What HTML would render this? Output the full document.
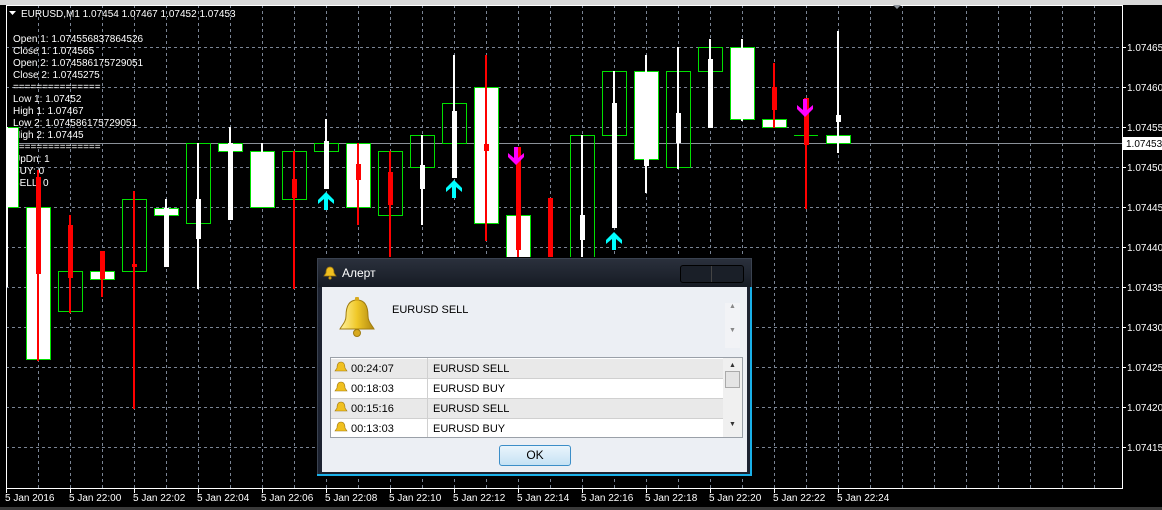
<!DOCTYPE html>
<html><head><meta charset="utf-8"><style>
body{margin:0;width:1162px;height:510px;background:#000;overflow:hidden;position:relative;font-family:"Liberation Sans",sans-serif;}
svg{position:absolute;left:0;top:0}
.t{font-family:"Liberation Sans",sans-serif;font-size:10px;fill:#fff}
#dlg{position:absolute;left:317px;top:258px;width:435px;height:218px;background:#1c2230;border:1px solid #3a4250;box-sizing:border-box;box-shadow:0 0 0 1px #000}
#dlg .bar{position:absolute;left:0;top:0;right:0;height:28px;background:linear-gradient(#2a303c,#161b24);}
#dlg .ttl{position:absolute;left:24px;top:7px;color:#fff;font-size:12px;font-family:"Liberation Sans",sans-serif}
#dlg .btns{position:absolute;left:362px;top:6px;width:62px;height:16px;border:1px solid #000;border-radius:3px;background:#1a1f28}
#dlg .in{position:absolute;left:4px;top:28px;width:425px;height:185px;background:#eceff4}
.lb{position:absolute;left:8px;top:70px;width:411px;height:79px;border:1px solid #9aa0a8;background:#fff;overflow:hidden}
.row{position:absolute;left:0;width:392px;height:20px;font-size:11px;font-family:"Liberation Sans",sans-serif;color:#000;border-bottom:1px solid #d0d0d0;box-sizing:border-box}
.row span{position:absolute;top:4px}
.ok{position:absolute;left:177px;top:158px;width:70px;height:19px;border:1px solid #3c8ec8;border-radius:3px;background:linear-gradient(#eaf5fc,#c5e2f4);font-size:12px;text-align:center;line-height:19px;font-family:"Liberation Sans",sans-serif}
</style></head><body>
<svg width="1162" height="510">
<rect x="0" y="0" width="1162" height="5" fill="#d8d8d8"/>
<g stroke="#7a8494" stroke-width="1" stroke-dasharray="3,3">
<path d="M6 47.5H1122M6 87.5H1122M6 127.5H1122M6 167.5H1122M6 207.5H1122M6 247.5H1122M6 287.5H1122M6 327.5H1122M6 367.5H1122M6 407.5H1122M6 447.5H1122"/>
<path d="M38.5 5V488M70.5 5V488M102.5 5V488M134.5 5V488M166.5 5V488M198.5 5V488M230.5 5V488M262.5 5V488M294.5 5V488M326.5 5V488M358.5 5V488M390.5 5V488M422.5 5V488M454.5 5V488M486.5 5V488M518.5 5V488M550.5 5V488M582.5 5V488M614.5 5V488M646.5 5V488M678.5 5V488M710.5 5V488M742.5 5V488M774.5 5V488M806.5 5V488M838.5 5V488M870.5 5V488M902.5 5V488M934.5 5V488M966.5 5V488M998.5 5V488M1030.5 5V488M1062.5 5V488M1094.5 5V488"/>
</g>
<line x1="6" y1="143.5" x2="1122" y2="143.5" stroke="#8a9098"/>
<rect x="6.5" y="5.5" width="1116" height="483" fill="none" stroke="#fff"/>
<g fill="#fff" stroke="#fff">
<path d="M6.5 488v5M70.5 488v5M134.5 488v5M198.5 488v5M262.5 488v5M326.5 488v5M390.5 488v5M454.5 488v5M518.5 488v5M582.5 488v5M646.5 488v5M710.5 488v5M774.5 488v5M838.5 488v5"/>
<path d="M1122 47.5h4M1122 87.5h4M1122 127.5h4M1122 167.5h4M1122 207.5h4M1122 247.5h4M1122 287.5h4M1122 327.5h4M1122 367.5h4M1122 407.5h4M1122 447.5h4"/>
</g>
<text class="t" x="13" y="42">Open 1: 1.074556837864526</text>
<text class="t" x="13" y="54">Close 1: 1.074565</text>
<text class="t" x="13" y="66">Open 2: 1.074586175729051</text>
<text class="t" x="13" y="78">Close 2: 1.0745275</text>
<text class="t" x="13" y="90">===============</text>
<text class="t" x="13" y="102">Low 1: 1.07452</text>
<text class="t" x="13" y="114">High 1: 1.07467</text>
<text class="t" x="13" y="126">Low 2: 1.074586175729051</text>
<text class="t" x="13" y="138">High 2: 1.07445</text>
<text class="t" x="13" y="150">===============</text>
<text class="t" x="13" y="162">UpDn: 1</text>
<text class="t" x="13" y="174">BUY: 0</text>
<text class="t" x="13" y="186">SELL: 0</text>
<g stroke="#00e000" stroke-width="1">
<rect x="6.5" y="127.5" width="12" height="80" fill="#fff"/>
<rect x="26.5" y="207.5" width="24" height="152" fill="#fff"/>
<rect x="58.5" y="271.5" width="24" height="40" fill="none"/>
<rect x="90.5" y="271.5" width="24" height="8" fill="#fff"/>
<rect x="122.5" y="199.5" width="24" height="72" fill="none"/>
<rect x="154.5" y="208.5" width="24" height="7" fill="#fff"/>
<rect x="186.5" y="143.5" width="24" height="80" fill="none"/>
<rect x="218.5" y="143.5" width="24" height="8" fill="#fff"/>
<rect x="250.5" y="151.5" width="24" height="56" fill="#fff"/>
<rect x="282.5" y="151.5" width="24" height="48" fill="none"/>
<rect x="314.5" y="143.5" width="24" height="8" fill="none"/>
<rect x="346.5" y="143.5" width="24" height="64" fill="#fff"/>
<rect x="378.5" y="151.5" width="24" height="64" fill="none"/>
<rect x="410.5" y="135.5" width="24" height="32" fill="none"/>
<rect x="442.5" y="103.5" width="24" height="40" fill="none"/>
<rect x="474.5" y="87.5" width="24" height="136" fill="#fff"/>
<rect x="506.5" y="215.5" width="24" height="60" fill="#fff"/>
<rect x="570.5" y="135.5" width="24" height="130" fill="none"/>
<rect x="602.5" y="71.5" width="24" height="64" fill="none"/>
<rect x="634.5" y="71.5" width="24" height="88" fill="#fff"/>
<rect x="666.5" y="71.5" width="24" height="96" fill="none"/>
<rect x="698.5" y="47.5" width="24" height="24" fill="none"/>
<rect x="730.5" y="47.5" width="24" height="72" fill="#fff"/>
<rect x="762.5" y="119.5" width="24" height="8" fill="#fff"/>
<line x1="794" y1="135.5" x2="818" y2="135.5"/>
<rect x="826.5" y="135.5" width="24" height="8" fill="#fff"/>
</g>
<g fill="#ff0000">
<rect x="37" y="170" width="2" height="191"/><rect x="36" y="177" width="5" height="97"/>
<rect x="69" y="215" width="2" height="98"/><rect x="68" y="225" width="5" height="53"/>
<rect x="101" y="251" width="2" height="46"/><rect x="100" y="251" width="5" height="28"/>
<rect x="133" y="191" width="2" height="218"/><rect x="132" y="264" width="5" height="3"/>
<rect x="293" y="151" width="2" height="138"/><rect x="292" y="179" width="5" height="19"/>
<rect x="357" y="143" width="2" height="82"/><rect x="356" y="164" width="5" height="16"/>
<rect x="389" y="151" width="2" height="110"/><rect x="388" y="172" width="5" height="33"/>
<rect x="485" y="55" width="2" height="186"/><rect x="484" y="144" width="5" height="7"/>
<rect x="517" y="147" width="2" height="115"/><rect x="516" y="147" width="5" height="103"/>
<rect x="548" y="198" width="5" height="62"/>
<rect x="773" y="63" width="2" height="65"/><rect x="772" y="87" width="5" height="23"/>
<rect x="805" y="98" width="2" height="111"/><rect x="804" y="98" width="5" height="47"/>
</g>
<g fill="#fff">
<rect x="6" y="127" width="2" height="160"/>
<rect x="165" y="199" width="2" height="68"/><rect x="164" y="208" width="5" height="59"/>
<rect x="197" y="143" width="2" height="146"/><rect x="196" y="199" width="5" height="40"/>
<rect x="229" y="127" width="2" height="93"/><rect x="228" y="143" width="5" height="77"/>
<rect x="261" y="143" width="2" height="64"/>
<rect x="325" y="119" width="2" height="70"/><rect x="324" y="141" width="5" height="48"/>
<rect x="421" y="135" width="2" height="90"/><rect x="420" y="165" width="5" height="24"/>
<rect x="453" y="55" width="2" height="123"/><rect x="452" y="111" width="5" height="67"/>
<rect x="581" y="135" width="2" height="125"/><rect x="580" y="215" width="5" height="25"/>
<rect x="613" y="71" width="2" height="157"/><rect x="612" y="103" width="5" height="125"/>
<rect x="645" y="55" width="2" height="138"/><rect x="644" y="159" width="5" height="7"/>
<rect x="677" y="47" width="2" height="122"/><rect x="676" y="113" width="5" height="30"/>
<rect x="709" y="39" width="2" height="89"/><rect x="708" y="59" width="5" height="69"/>
<rect x="741" y="39" width="2" height="82"/>
<rect x="837" y="31" width="2" height="122"/><rect x="836" y="115" width="5" height="7"/>
</g>
<g fill="#00ffff">
<path d="M326 192l-8 8v4l6-5v11h4v-11l6 5v-4z"/>
<path d="M454 180l-8 8v4l6-5v11h4v-11l6 5v-4z"/>
<path d="M614 232l-8 8v4l6-5v11h4v-11l6 5v-4z"/>
</g>
<g fill="#ff00ff">
<path d="M516 165l-8-8v-4l6 5v-11h4v11l6-5v4z"/>
<path d="M805 117l-8-8v-4l6 5v-11h4v11l6-5v4z"/>
</g>
<path d="M9 11h7l-3.5 4z" fill="#fff"/>
<text class="t" x="21" y="17">EURUSD,M1  1.07454 1.07467 1.07452 1.07453</text>
<path d="M893 5h8l-4 4z" fill="#8a9098"/>
<text class="t" x="1127" y="51">1.07465</text>
<text class="t" x="1127" y="91">1.07460</text>
<text class="t" x="1127" y="131">1.07455</text>
<text class="t" x="1127" y="171">1.07450</text>
<text class="t" x="1127" y="211">1.07445</text>
<text class="t" x="1127" y="251">1.07440</text>
<text class="t" x="1127" y="291">1.07435</text>
<text class="t" x="1127" y="331">1.07430</text>
<text class="t" x="1127" y="371">1.07425</text>
<text class="t" x="1127" y="411">1.07420</text>
<text class="t" x="1127" y="451">1.07415</text>
<rect x="1123" y="137" width="39" height="13" fill="#fff"/>
<text x="1126" y="147" style="font-family:'Liberation Sans',sans-serif;font-size:10px" fill="#000">1.07453</text>
<text class="t" x="5" y="501">5 Jan 2016</text>
<text class="t" x="69" y="501">5 Jan 22:00</text>
<text class="t" x="133" y="501">5 Jan 22:02</text>
<text class="t" x="197" y="501">5 Jan 22:04</text>
<text class="t" x="261" y="501">5 Jan 22:06</text>
<text class="t" x="325" y="501">5 Jan 22:08</text>
<text class="t" x="389" y="501">5 Jan 22:10</text>
<text class="t" x="453" y="501">5 Jan 22:12</text>
<text class="t" x="517" y="501">5 Jan 22:14</text>
<text class="t" x="581" y="501">5 Jan 22:16</text>
<text class="t" x="645" y="501">5 Jan 22:18</text>
<text class="t" x="709" y="501">5 Jan 22:20</text>
<text class="t" x="773" y="501">5 Jan 22:22</text>
<text class="t" x="837" y="501">5 Jan 22:24</text>
<rect x="0" y="507" width="1162" height="3" fill="#3a3a3a"/>
</svg>
<div id="dlg">
<div class="bar"></div>
<svg width="14" height="14" style="left:5px;top:7px"><path d="M7 1c-3 0-4 3-4 6l-2 3h12l-2-3c0-3-1-6-4-6z" fill="#f0c020" stroke="#a07810" stroke-width=".8"/><circle cx="7" cy="12" r="1.5" fill="#d0a010"/></svg>
<div class="ttl">Алерт</div>
<div class="btns"><div style="position:absolute;left:30px;top:0;width:1px;height:16px;background:#444"></div></div>
<div class="in">
<svg width="42" height="42" style="left:14px;top:10px"><defs><linearGradient id="bg" x1="0" x2="1"><stop offset="0" stop-color="#fff3a0"/><stop offset=".5" stop-color="#f0c828"/><stop offset="1" stop-color="#b08810"/></linearGradient></defs><path d="M21 3c-9 0-11 8-11 16 0 6-4 9-6 13h34c-2-4-6-7-6-13 0-8-2-16-11-16z" fill="url(#bg)" stroke="#a07c10"/><circle cx="21" cy="36" r="3.5" fill="#d8aa20" stroke="#a07c10"/><rect x="19" y="0" width="4" height="4" rx="1" fill="#d8aa20"/></svg>
<div style="position:absolute;left:70px;top:17px;font-size:11px;font-family:'Liberation Sans',sans-serif">EURUSD SELL</div>
<div style="position:absolute;left:403px;top:16px;width:15px;height:45px;background:#f2f3f6;color:#888;font-size:7px;text-align:center;line-height:8px">▲<br><br><br>▼</div>
<div class="lb">
<div class="row" style="top:1px;background:#e9e9e9"><span style="left:20px">00:24:07</span><span style="left:102px">EURUSD SELL</span></div>
<div class="row" style="top:21px;background:#fff"><span style="left:20px">00:18:03</span><span style="left:102px">EURUSD BUY</span></div>
<div class="row" style="top:41px;background:#e9e9e9"><span style="left:20px">00:15:16</span><span style="left:102px">EURUSD SELL</span></div>
<div class="row" style="top:61px;background:#fff;border:none"><span style="left:20px">00:13:03</span><span style="left:102px">EURUSD BUY</span></div>
<div style="position:absolute;left:96px;top:0;width:1px;height:79px;background:#d0d0d0"></div>
<svg width="96" height="79" style="left:0;top:0"><g fill="#f0c020" stroke="#a07810" stroke-width=".6"><path d="M10 4c-3 0-4 3-4 6l-2 3h12l-2-3c0-3-1-6-4-6z"/><path d="M10 24c-3 0-4 3-4 6l-2 3h12l-2-3c0-3-1-6-4-6z"/><path d="M10 44c-3 0-4 3-4 6l-2 3h12l-2-3c0-3-1-6-4-6z"/><path d="M10 64c-3 0-4 3-4 6l-2 3h12l-2-3c0-3-1-6-4-6z"/></g></svg>
<div style="position:absolute;left:392px;top:0;width:19px;height:79px;background:#f0f0f0;color:#333;font-size:7px;text-align:center"><div style="margin-top:4px">▲</div><div style="margin:2px auto;width:13px;height:15px;border:1px solid #aaa;background:#e4e4e4"></div><div style="margin-top:33px">▼</div></div>
</div>
<div class="ok">OK</div>
</div>
<div style="position:absolute;left:-1px;bottom:-1px;right:-1px;height:2px;background:#1ab0e8"></div>
<div style="position:absolute;right:-1px;top:28px;bottom:-1px;width:2px;background:#1ab0e8"></div>
</div>
</body></html>
